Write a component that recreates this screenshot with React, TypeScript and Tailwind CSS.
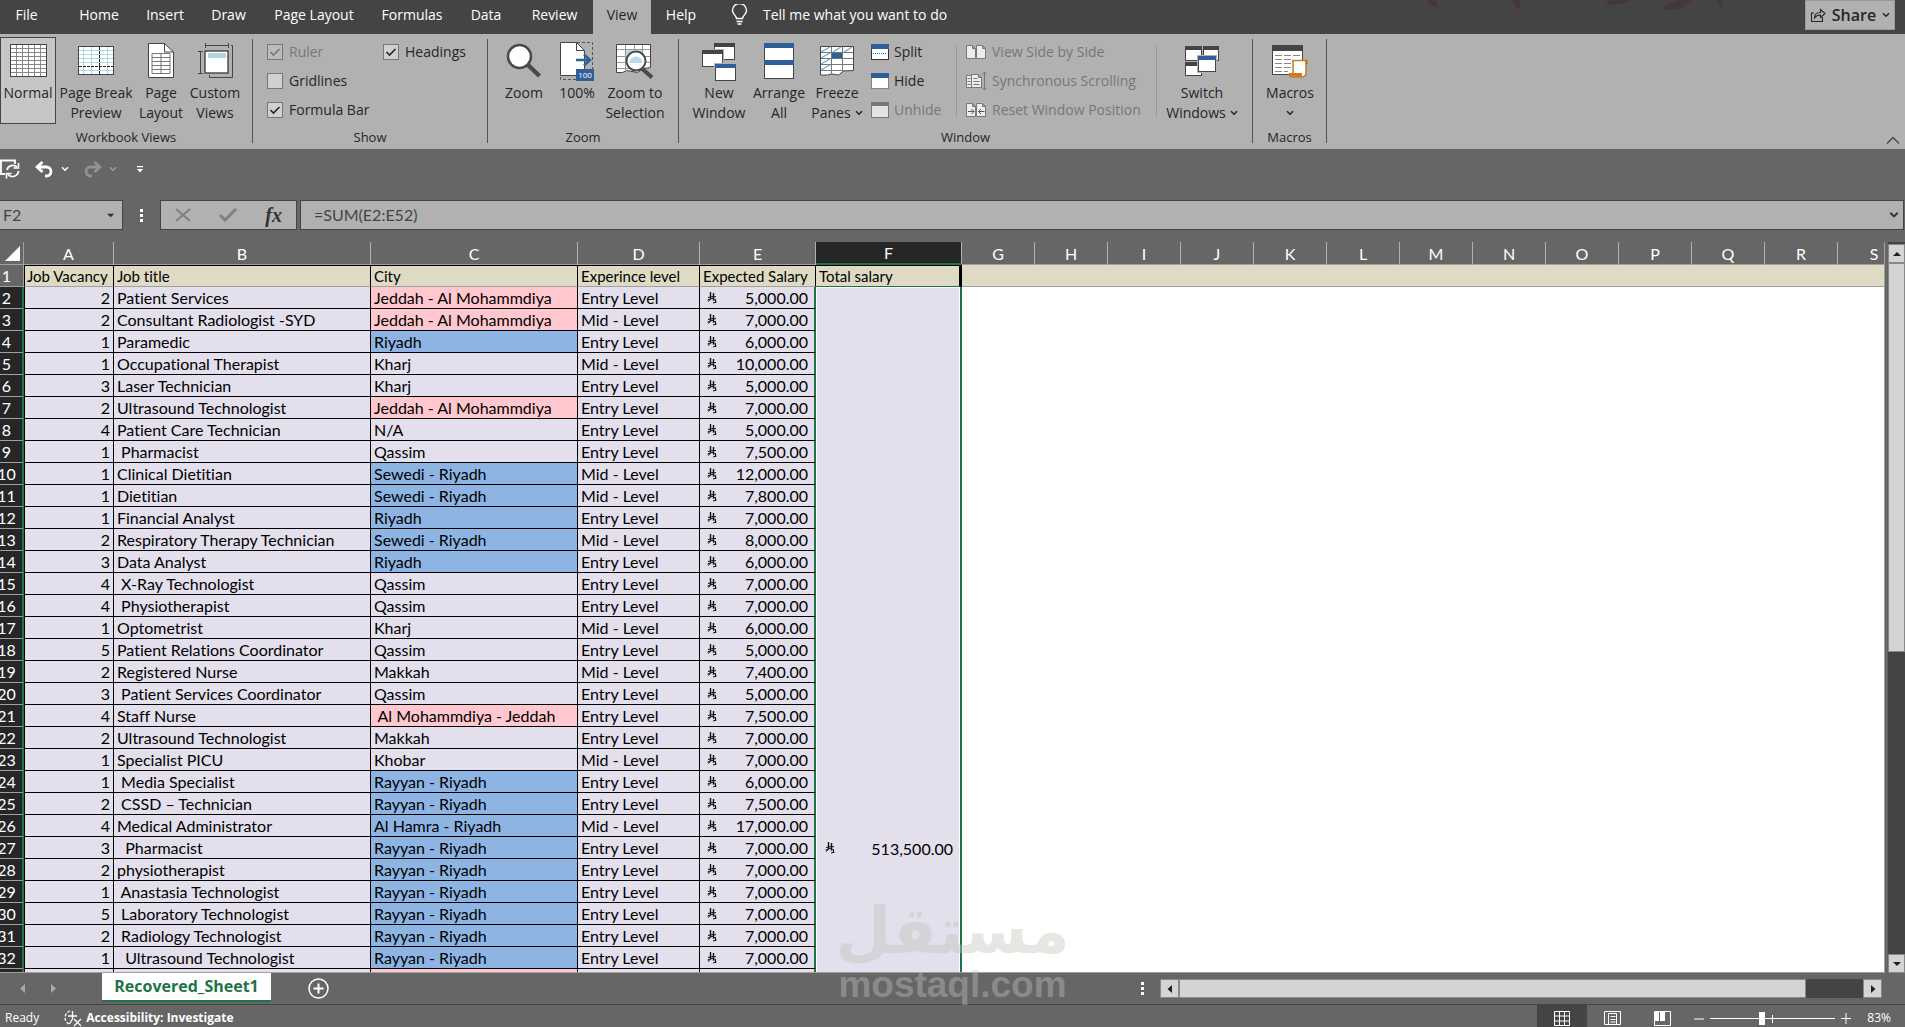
import type { ReactNode } from "react";
import clsx from "clsx";

type Row = [vacancy: number, title: string, city: string, level: "E" | "M", salary: string];

const rows: Row[] = [
  [2, "Patient Services", "Jeddah - Al Mohammdiya", "E", "5,000.00"],
  [2, "Consultant Radiologist -SYD", "Jeddah - Al Mohammdiya", "M", "7,000.00"],
  [1, "Paramedic", "Riyadh", "E", "6,000.00"],
  [1, "Occupational Therapist", "Kharj", "M", "10,000.00"],
  [3, "Laser Technician", "Kharj", "E", "5,000.00"],
  [2, "Ultrasound Technologist", "Jeddah - Al Mohammdiya", "E", "7,000.00"],
  [4, "Patient Care Technician", "N/A", "E", "5,000.00"],
  [1, " Pharmacist", "Qassim", "E", "7,500.00"],
  [1, "Clinical Dietitian", "Sewedi - Riyadh", "M", "12,000.00"],
  [1, "Dietitian", "Sewedi - Riyadh", "M", "7,800.00"],
  [1, "Financial Analyst", "Riyadh", "E", "7,000.00"],
  [2, "Respiratory Therapy Technician", "Sewedi - Riyadh", "M", "8,000.00"],
  [3, "Data Analyst", "Riyadh", "E", "6,000.00"],
  [4, " X-Ray Technologist", "Qassim", "E", "7,000.00"],
  [4, " Physiotherapist", "Qassim", "E", "7,000.00"],
  [1, "Optometrist", "Kharj", "M", "6,000.00"],
  [5, "Patient Relations Coordinator", "Qassim", "E", "5,000.00"],
  [2, "Registered Nurse", "Makkah", "M", "7,400.00"],
  [3, " Patient Services Coordinator", "Qassim", "E", "5,000.00"],
  [4, "Staff Nurse", " Al Mohammdiya - Jeddah", "E", "7,500.00"],
  [2, "Ultrasound Technologist", "Makkah", "E", "7,000.00"],
  [1, "Specialist PICU", "Khobar", "M", "7,000.00"],
  [1, " Media Specialist", "Rayyan - Riyadh", "E", "6,000.00"],
  [2, " CSSD – Technician", "Rayyan - Riyadh", "E", "7,500.00"],
  [4, "Medical Administrator", "Al Hamra - Riyadh", "M", "17,000.00"],
  [3, "  Pharmacist", "Rayyan - Riyadh", "E", "7,000.00"],
  [2, "physiotherapist", "Rayyan - Riyadh", "E", "7,000.00"],
  [1, " Anastasia Technologist", "Rayyan - Riyadh", "E", "7,000.00"],
  [5, " Laboratory Technologist", "Rayyan - Riyadh", "E", "7,000.00"],
  [2, " Radiology Technologist", "Rayyan - Riyadh", "E", "7,000.00"],
  [1, "  Ultrasound Technologist", "Rayyan - Riyadh", "E", "7,000.00"],
];

const emptyRows = Array.from({ length: 20 }, (_, i) => 33 + i);
const letters = "ABCDEFGHIJKLMNOPQRS".split("");

const tabs = [
  { name: "File", width: "w-[53px] mr-3" },
  { name: "Home", width: "w-[68px]" },
  { name: "Insert", width: "w-[64px]" },
  { name: "Draw", width: "w-[63px]" },
  { name: "Page Layout", width: "w-[108px]" },
  { name: "Formulas", width: "w-[88px]" },
  { name: "Data", width: "w-[60px]" },
  { name: "Review", width: "w-[77px]" },
  { name: "View", width: "w-[58px]" },
  { name: "Help", width: "w-[60px]" },
];

function Chevron({ className = "" }: { className?: string }) {
  return (
    <svg viewBox="0 0 8 6" className={clsx("inline-block h-[6px] w-[8px]", className)} fill="none" stroke="currentColor" strokeWidth="1.5">
      <path d="M1 1.2 4 4.2 7 1.2" />
    </svg>
  );
}

function Riyal() {
  return (
    <svg viewBox="0 0 10 12" className="h-3 w-[10px]" fill="none" stroke="#111">
      <path d="M3.500 0v7M6.500 1v7.500" strokeWidth="1.400" />
      <path d="M1 5.500l5-1M1 9.500l2.500-2M.5 8l6-2M6.500 5l2.500-.5M6.500 8l2.500-.5M6 11l3.500-1M8.500 8v3" />
    </svg>
  );
}

/* ribbon icons */

function NormalIcon() {
  return (
    <svg width="37" height="33" viewBox="0 0 37 33">
      <rect x=".5" y=".5" width="36" height="32" fill="#fff" stroke="#444" />
      <path d="M6.5 1v31M12.5 1v31M18.5 1v31M24.5 1v31M30.5 1v31M1 4.5h35M1 8.5h35M1 12.5h35M1 16.5h35M1 20.5h35M1 24.5h35M1 28.5h35" stroke="#888" />
    </svg>
  );
}

function PageBreakIcon() {
  return (
    <svg width="36" height="29" viewBox="0 0 36 29">
      <rect x=".5" y=".5" width="35" height="28" fill="#fff" stroke="#444" />
      <path d="M5.5 1v27M13.5 1v27M29.5 1v27M1 4.5h34M1 8.5h34M1 12.5h34M1 16.5h34M1 24.5h34" stroke="#a9d8ea" />
      <path d="M21.5 1v27M1 20.5h34" stroke="#262626" strokeDasharray="3 1" />
    </svg>
  );
}

function PageLayoutIcon() {
  return (
    <svg width="26" height="35" viewBox="0 0 26 35">
      <path d="M.5.5h16l9 8.5v25.500H.5z" fill="#fff" stroke="#444" />
      <path d="M16.500.5V9h9" fill="none" stroke="#444" />
      <path d="M4 10.500h18v20H4zM4 14.500h18M4 18.500h18M4 22.500h18M4 26.500h18M13 10.500v20" fill="none" stroke="#777" />
    </svg>
  );
}

function CustomViewsIcon() {
  return (
    <svg width="37" height="37" viewBox="0 0 37 37">
      <path d="M8 3.500h24M8.500 1v5M31.500 1v5M3.500 9v22M1 9.500h5M1 31.500h5M34 3.500h1.500V35.500h-23V33" fill="none" stroke="#444" />
      <rect x="8" y="9" width="23" height="22" fill="#fff" stroke="#444" strokeWidth="1.400" />
      <rect x="11" y="11" width="18" height="5" fill="#b5d5e3" />
    </svg>
  );
}

function ZoomIcon() {
  return (
    <svg width="36" height="36" viewBox="0 0 36 36">
      <path d="M21.500 21.500 33.500 33" stroke="#4a4a4a" strokeWidth="4.500" />
      <circle cx="13.500" cy="13.500" r="11.500" fill="#fff" stroke="#4a4a4a" strokeWidth="2.500" />
    </svg>
  );
}

function HundredIcon() {
  return (
    <svg width="34" height="40" viewBox="0 0 34 40">
      <path d="M17 1.500h15.500V28M16 38.500H.5V34" fill="none" stroke="#555" strokeDasharray="3 2" />
      <path d="M.5 1.500h16l8 8V34.500H.5z" fill="#fff" stroke="#444" />
      <path d="M16.500 1.500v8h8" fill="none" stroke="#444" />
      <path d="M16 19h13M24 13.500l6 5.500-6 5.500" fill="none" stroke="#2f6198" strokeWidth="2.500" />
      <rect x="16" y="28" width="18" height="12" fill="#2f5f98" />
      <text x="25" y="37" textAnchor="middle" fontSize="8" fill="#fff" fontFamily="Open Sans, sans-serif">100</text>
    </svg>
  );
}

function ZoomSelectionIcon() {
  return (
    <svg width="38" height="36" viewBox="0 0 38 36">
      <path d="M.5 1.500h34v23l-7 1-6 4-11-2-4 2h-6z" fill="#fff" stroke="#444" />
      <path d="M9.500 2v26M18.500 2v26M26.500 2v23M1 6.500h33M1 13.500h33M1 19.500h33M1 25.500h20" stroke="#999" />
      <path d="M10 7h16v12H10z" fill="#bcdbe8" />
      <path d="M26.500 26 36 34.500" stroke="#4a4a4a" strokeWidth="4" />
      <circle cx="20" cy="18" r="9.500" fill="#fff" stroke="#4a4a4a" strokeWidth="2" />
      <path d="M13.500 20a6.500 6.500 0 1 1 13 0z" fill="#bcdbe8" />
    </svg>
  );
}

function MiniWindow({ x, y, w, h, bar }: { x: number; y: number; w: number; h: number; bar: string }) {
  return (
    <g>
      <rect x={x - 1} y={y - 1} width={w + 2} height={h + 2} fill="#b1b1b1" />
      <rect x={x + 0.5} y={y + 0.5} width={w - 1} height={h - 1} fill="#fff" stroke="#444" />
      <rect x={x} y={y} width={w} height="4" fill={bar} />
    </g>
  );
}

function NewWindowIcon() {
  return (
    <svg width="36" height="40" viewBox="0 0 36 40">
      <MiniWindow x={13} y={2} w={21} h={17} bar="#444" />
      <MiniWindow x={1} y={9} w={21} h={17} bar="#444" />
      <MiniWindow x={14} y={23} w={21} h={17} bar="#2f5f98" />
    </svg>
  );
}

function ArrangeIcon() {
  return (
    <svg width="30" height="36" viewBox="0 0 30 36">
      <rect x=".5" y=".5" width="29" height="35" fill="#fff" stroke="#444" />
      <path d="M0 0h30v5H0zM0 17h30v5H0z" fill="#2f5f98" />
    </svg>
  );
}

function FreezeIcon() {
  return (
    <svg width="34" height="30" viewBox="0 0 34 30">
      <path d="M.5.5h33v24l-10 .5-5 4-7-1-4 1H.5z" fill="#fff" stroke="#444" />
      <path d="M11.500 1v27M22.500 1v25M1 6.500h32M1 12.500h32M1 18.500h32M1 24.500h24" stroke="#777" />
      <path d="M1 6 10 1M1 12l9-5M1 18l9-5M1 24l9-5M13 6l8-5M24 6l8-5" stroke="#6fa8cc" strokeWidth="1.300" />
      <rect x="12" y="7" width="10" height="5" fill="#2f5f98" />
    </svg>
  );
}

function SwitchIcon() {
  return (
    <svg width="36" height="32" viewBox="0 0 36 32">
      <MiniWindow x={1} y={1} w={17} h={15} bar="#444" />
      <MiniWindow x={19} y={1} w={16} h={15} bar="#444" />
      <MiniWindow x={1} y={17} w={17} h={14} bar="#444" />
      <MiniWindow x={14} y={11} w={18} h={16} bar="#2f5f98" />
    </svg>
  );
}

function MacrosIcon() {
  return (
    <svg width="36" height="34" viewBox="0 0 36 34">
      <rect x=".5" y="1.500" width="30" height="29" fill="#fff" stroke="#444" />
      <rect y="1" width="31" height="6" fill="#444" />
      <path d="M3 11.500h7M12 11.500h7M21 11.500h7M3 15.500h7M12 15.500h7M3 19.500h7M12 19.500h7M3 23.500h7M12 23.500h7M3 27.500h7M12 27.500h4" stroke="#888" />
      <path d="M21 30V16.500h13V30.500l-3 2.500H19z" fill="#fff" stroke="#c97d2b" strokeWidth="1.600" />
      <path d="M17 29h13v4H17zM33 16h3v4h-3z" fill="#c97d2b" />
    </svg>
  );
}

function SmallWindowIcon({ kind }: { kind: "split" | "hide" | "unhide" }) {
  const off = kind === "unhide";
  return (
    <svg width="18" height="16" viewBox="0 0 18 16">
      <rect x=".5" y=".5" width="17" height="15" fill={off ? "#e4e4e4" : "#fff"} stroke={off ? "#777" : "#333"} strokeDasharray={kind === "hide" ? "1 1" : undefined} />
      <rect width="18" height={kind === "unhide" ? 4 : 5} fill={off ? "#777" : "#2f5f98"} />
      {kind === "split" && <path d="M2 9.500h14" stroke="#2f5f98" strokeDasharray="1 1" />}
    </svg>
  );
}

function PagesIcon({ kind }: { kind: "side" | "sync" | "reset" }) {
  return (
    <svg width="21" height="20" viewBox="0 0 21 20" fill="#ececec" stroke="#777">
      {kind === "sync" ? (
        <>
          <path d="M.5 4.500h5v12h-5zM5.500 3.500h7l3 3v10h-10zM12.500 3.500v3h3" />
          <path d="M1.500 7.500h3M1.500 10.500h3M1.500 13.500h3M7.500 7.500h4M7.500 10.500h6M7.500 13.500h6" />
          <path d="M18.500 1v18M16.500 3.500l2-2.500 2 2.500M16.500 16.500l2 2.500 2-2.500" fill="none" />
        </>
      ) : (
        <>
          <path d="M.5 3.500h6l3 3v10h-9zM10.500 3.500h6l3 3v10h-9zM6.500 3.500v3h3M16.500 3.500v3h3" />
          {kind === "reset" && <path d="M2 11.500h6M5.500 9l2.500 2.500L5.500 14M18.500 11.500h-6M15 9l-2.500 2.500L15 14" fill="none" stroke="#555" />}
        </>
      )}
    </svg>
  );
}

function BigButton({ icon, lines, width, active, arrow }: { icon: ReactNode; lines: string[]; width: string; active?: boolean; arrow?: boolean }) {
  return (
    <button className={clsx("flex h-[87px] flex-col items-center border text-[14px] leading-5 whitespace-nowrap", width, active ? "border-[#444] bg-[#c6c6c6]" : "border-transparent")}>
      <span className="flex h-[45px] items-center justify-center">{icon}</span>
      <span>{lines[0]}</span>
      <span className="flex min-h-5 items-center gap-1">
        {lines[1]}
        {arrow && <Chevron />}
      </span>
    </button>
  );
}

function Group({ label, width, children }: { label: string; width: string; children: ReactNode }) {
  return (
    <section className={clsx("flex shrink-0 flex-col", width)}>
      <div className="flex h-[91px]">{children}</div>
      <div className="flex h-5 items-center justify-center text-[13px]">{label}</div>
    </section>
  );
}

function Divider() {
  return <div className="my-[2px] h-[104px] w-px shrink-0 bg-[#555]" />;
}

function Check({ label, checked, disabled }: { label: string; checked?: boolean; disabled?: boolean }) {
  return (
    <label className={clsx("flex h-[29px] items-center gap-[6px] whitespace-nowrap", disabled && "text-[#777]")}>
      <span className="relative flex h-4 w-4">
        <input type="checkbox" defaultChecked={checked} disabled={disabled} className={clsx("h-4 w-4 appearance-none border border-[#777]", disabled ? "bg-[#bbb]" : "bg-[#d0d0d0]")} />
        {checked && (
          <svg viewBox="0 0 16 16" className="pointer-events-none absolute inset-0" fill="none" stroke="currentColor" strokeWidth="1.600">
            <path d="M3.500 8 6.500 11 12.500 5" />
          </svg>
        )}
      </span>
      {label}
    </label>
  );
}

function SmallButton({ icon, label, disabled }: { icon: ReactNode; label: string; disabled?: boolean }) {
  return (
    <button disabled={disabled} className={clsx("flex h-[29px] items-center gap-[5px] whitespace-nowrap", disabled && "text-[#777]")}>
      {icon}
      {label}
    </button>
  );
}

function TopBar() {
  return (
    <header className="relative flex h-[34px] shrink-0 items-start bg-[#444] text-[14px] text-white">
      <svg className="absolute top-0 right-[180px] h-[10px] w-[300px]" viewBox="0 0 300 10" fill="#43363f">
        <path d="M2 0h9l2 8-6-2zM87 0h8v9l-5-3zM179 3l6-3h19l-6 4-10 1zM219 0h2v3zM236 9l16-9h14l-9 8-12 2zM292 0h6l-2 9z" />
      </svg>
      <nav className="flex">
        {tabs.map((t) => (
          <button key={t.name} className={clsx("h-[34px] pb-[5px] text-center whitespace-nowrap", t.width, t.name === "View" && "bg-[#b1b1b1] text-[#262626]")}>
            {t.name}
          </button>
        ))}
      </nav>
      <button className="ml-5 flex h-[29px] items-center gap-[15px] whitespace-nowrap">
        <svg width="17" height="21" viewBox="0 0 17 21" fill="none" stroke="#fff" strokeWidth="1.400">
          <path d="M5.500 14.500c0-3-4-4-4-8a7 7 0 0 1 14 0c0 4-4 5-4 8zM5.500 17.500h6M6.500 20h4" />
        </svg>
        Tell me what you want to do
      </button>
      <button className="mr-[10px] ml-auto flex h-[30px] w-[90px] items-center justify-between border border-[#999] bg-[#b1b1b1] px-1 text-[16px] font-semibold text-[#262626]">
        <svg width="16" height="16" viewBox="0 0 16 16" fill="none" stroke="#262626" strokeWidth="1.100">
          <path d="M4 6H1.500v8.500h11V10M4.500 11c0-4 3-5.500 6-5.500v-3L15 6.500l-4.500 4v-2.500c-3 0-4.500 1-6 3z" />
        </svg>
        Share
        <Chevron />
      </button>
    </header>
  );
}

function Ribbon() {
  return (
    <div className="flex h-[115px] shrink-0 bg-[#b1b1b1] pt-[3px] text-[14px] text-[#262626]">
      <Group label="Workbook Views" width="w-[252px]">
        <div className="flex gap-px">
          <BigButton active icon={<NormalIcon />} lines={["Normal"]} width="w-[56px]" />
          <BigButton icon={<PageBreakIcon />} lines={["Page Break", "Preview"]} width="w-[78px]" />
          <BigButton icon={<PageLayoutIcon />} lines={["Page", "Layout"]} width="w-[50px]" />
          <BigButton icon={<CustomViewsIcon />} lines={["Custom", "Views"]} width="w-[56px]" />
        </div>
      </Group>
      <Divider />
      <Group label="Show" width="w-[234px]">
        <div className="flex pl-[14px]">
          <div className="w-[116px]">
            <Check label="Ruler" checked disabled />
            <Check label="Gridlines" />
            <Check label="Formula Bar" checked />
          </div>
          <Check label="Headings" checked />
        </div>
      </Group>
      <Divider />
      <Group label="Zoom" width="w-[190px]">
        <div className="flex gap-px pl-[9px]">
          <BigButton icon={<ZoomIcon />} lines={["Zoom"]} width="w-[54px]" />
          <BigButton icon={<HundredIcon />} lines={["100%"]} width="w-[50px]" />
          <BigButton icon={<ZoomSelectionIcon />} lines={["Zoom to", "Selection"]} width="w-[64px]" />
        </div>
      </Group>
      <Divider />
      <Group label="Window" width="w-[573px]">
        <div className="flex pl-[11px]">
          <BigButton icon={<NewWindowIcon />} lines={["New", "Window"]} width="w-[58px]" />
          <BigButton icon={<ArrangeIcon />} lines={["Arrange", "All"]} width="w-[62px]" />
          <BigButton icon={<FreezeIcon />} lines={["Freeze", "Panes"]} width="w-[54px]" arrow />
        </div>
        <div className="ml-[7px] w-[85px]">
          <SmallButton icon={<SmallWindowIcon kind="split" />} label="Split" />
          <SmallButton icon={<SmallWindowIcon kind="hide" />} label="Hide" />
          <SmallButton icon={<SmallWindowIcon kind="unhide" />} label="Unhide" disabled />
        </div>
        <div className="mt-2 mb-3 w-px bg-[#999]" />
        <div className="ml-[9px] w-[190px]">
          <SmallButton icon={<PagesIcon kind="side" />} label="View Side by Side" disabled />
          <SmallButton icon={<PagesIcon kind="sync" />} label="Synchronous Scrolling" disabled />
          <SmallButton icon={<PagesIcon kind="reset" />} label="Reset Window Position" disabled />
        </div>
        <div className="mt-2 mb-3 w-px bg-[#999]" />
        <div className="pl-[6px]">
          <BigButton icon={<SwitchIcon />} lines={["Switch", "Windows"]} width="w-[78px]" arrow />
        </div>
      </Group>
      <Divider />
      <Group label="Macros" width="w-[73px]">
        <div className="pl-[7px]">
          <BigButton icon={<MacrosIcon />} lines={["Macros"]} width="w-[60px]" arrow />
        </div>
      </Group>
      <Divider />
      <button aria-label="Collapse ribbon" className="mt-auto mr-[5px] mb-1 ml-auto">
        <svg width="14" height="9" viewBox="0 0 14 9" fill="none" stroke="#444" strokeWidth="1.300">
          <path d="M1 7.500 7 1.500 13 7.500" />
        </svg>
      </button>
    </div>
  );
}

function QuickAccess() {
  return (
    <div className="flex h-[40px] shrink-0 items-center text-white">
      <button aria-label="Save">
        <svg width="20" height="20" viewBox="0 0 20 20" fill="none" stroke="currentColor" strokeWidth="1.800">
          <path d="M0 1.500h15V5M0 15h5M1 1v14" />
          <path d="M7 11a6 6 0 0 1 10-3M18.500 12a6 6 0 0 1-10.500 3.500" />
          <path d="M18.500 4v5h-5M6.500 19.500v-5h5" strokeWidth="1.600" />
        </svg>
      </button>
      <button aria-label="Undo" className="ml-[15px]">
        <svg width="19" height="17" viewBox="0 0 19 17" fill="none" stroke="currentColor" strokeWidth="2.800">
          <path d="M7.500 1 2 6l5.500 5M2 6h9.500a4.500 4.500 0 0 1 0 9H10" />
        </svg>
      </button>
      <Chevron className="ml-[7px]" />
      <button aria-label="Redo" disabled className="ml-[14px] text-[#929292]">
        <svg width="19" height="17" viewBox="0 0 19 17" fill="none" stroke="currentColor" strokeWidth="2.800">
          <path d="M11.500 1 17 6l-5.500 5M17 6H7.500a4.500 4.500 0 0 0 0 9H9" />
        </svg>
      </button>
      <Chevron className="ml-[7px] text-[#a0a0a0]" />
      <button aria-label="Customize toolbar" className="ml-[20px]">
        <svg width="6" height="7" viewBox="0 0 6 7" fill="currentColor">
          <path d="M0 0h6v1.200H0zM0 3h6L3 6.500z" />
        </svg>
      </button>
    </div>
  );
}

function Dots() {
  return (
    <div className="flex w-[3px] flex-col gap-[2px]">
      <i className="h-[3px] bg-white" />
      <i className="h-[3px] bg-white" />
      <i className="h-[3px] bg-white" />
    </div>
  );
}

function FormulaBar() {
  return (
    <div className="mt-[11px] flex h-[30px] shrink-0 items-stretch pr-px font-[Lato,sans-serif] text-[16px] text-[#444]">
      <div className="flex w-[123px] items-center border border-l-0 border-[#444] bg-[#b1b1b1] pr-2">
        <input aria-label="Name box" defaultValue="F2" className="w-full min-w-0 bg-transparent pl-[3px] outline-none" />
        <svg width="8" height="5" viewBox="0 0 8 5" fill="#333">
          <path d="M0 .5h8L4 4.500z" />
        </svg>
      </div>
      <div className="flex w-[37px] items-center justify-center">
        <Dots />
      </div>
      <div className="flex w-[137px] items-center justify-between border border-[#444] bg-[#b1b1b1] px-[14px]">
        <button aria-label="Cancel">
          <svg width="16" height="14" viewBox="0 0 16 14" stroke="#808080" strokeWidth="2">
            <path d="M1 1 15 13M15 1 1 13" />
          </svg>
        </button>
        <button aria-label="Enter">
          <svg width="18" height="14" viewBox="0 0 18 14" fill="none" stroke="#808080" strokeWidth="3">
            <path d="M1 7 6 12 17 1" />
          </svg>
        </button>
        <button aria-label="Insert function" className="font-['Liberation_Serif',serif] text-[20px] leading-6 font-bold text-[#333] italic">
          fx
        </button>
      </div>
      <div className="ml-[3px] flex flex-1 items-center border border-[#444] bg-[#b1b1b1] pr-1">
        <input aria-label="Formula" defaultValue="=SUM(E2:E52)" className="flex-1 bg-transparent pl-[13px] outline-none" />
        <Chevron className="h-[8px] w-[10px] text-[#333]" />
      </div>
    </div>
  );
}

const cell = "border-r border-b border-black bg-[#e3dfec] whitespace-pre";

function RowHead({ n }: { n: number }) {
  return (
    <th scope="row" className="border-r-2 border-b border-r-[#217346] border-b-[#a0a0a0] bg-[#262626] font-normal text-white">
      <div className="flex w-[13px] justify-center">{n}</div>
    </th>
  );
}

function Sheet() {
  return (
    <div className="min-w-0 flex-1 overflow-hidden border-r border-b border-[#a0a0a0] bg-white">
      <table className="w-[1911px] table-fixed border-separate border-spacing-0 font-[Lato,sans-serif] text-[16px] leading-[21px] text-black [font-variant-ligatures:none]">
        <colgroup>
          <col className="w-[24px]" />
          <col className="w-[90px]" />
          <col className="w-[257px]" />
          <col className="w-[207px]" />
          <col className="w-[122px]" />
          <col className="w-[116px]" />
          <col className="w-[146px]" />
          {letters.slice(6).map((l) => (
            <col key={l} className="w-[73px]" />
          ))}
        </colgroup>
        <thead>
          <tr className="h-[23px] bg-[#666] text-white">
            <th className="border-r border-b border-[#a0a0a0]">
              <svg width="15" height="15" viewBox="0 0 15 15" className="ml-[5px]" fill="#fff">
                <path d="M15 0v15H0z" />
              </svg>
            </th>
            {letters.map((l) => (
              <th key={l} scope="col" className={clsx("border-r border-r-[#b1b1b1] font-normal", l === "F" ? "border-b-2 border-b-[#217346] bg-[#262626] leading-5" : "border-b border-b-[#a0a0a0]")}>
                {l}
              </th>
            ))}
          </tr>
        </thead>
        <tbody>
          <tr className="h-[22px]">
            <th scope="row" className="border-r border-b border-[#a0a0a0] bg-[#666] font-normal text-white">
              <div className="flex w-[13px] justify-center">1</div>
            </th>
            {["Job Vacancy", "Job title", "City", "Experince level", "Expected Salary", "Total salary"].map((h, i) => (
              <td
                key={h}
                className={clsx(
                  "border-t border-r border-b border-black bg-[#dfdac3] text-[15px] leading-5 whitespace-nowrap",
                  i === 0 ? "border-l pl-[2px]" : "pl-[3px]",
                  i === 5 ? "border-r-[3px] border-b-[#217346]" : "border-b-[#a0a0a0]",
                )}
              >
                {h}
              </td>
            ))}
            <td colSpan={13} className="border-b border-[#a0a0a0] bg-[#dfdac3]" />
          </tr>
          {rows.map(([vacancy, title, city, level, salary], i) => (
            <tr key={i} className="h-[22px]">
              <RowHead n={i + 2} />
              <td className={clsx(cell, "border-l pr-[3px] text-right")}>{vacancy}</td>
              <td className={clsx(cell, "pl-[3px]")}>{title}</td>
              <td className={clsx("border-r border-b border-black pl-[3px] whitespace-pre", city.includes("Jeddah") ? "bg-[#ffc7ce]" : city.includes("Riyadh") ? "bg-[#8db4e2]" : "bg-[#e3dfec]")}>{city}</td>
              <td className={clsx(cell, "pl-[3px]")}>{level === "E" ? "Entry Level" : "Mid - Level"}</td>
              <td className="border-r-2 border-b border-r-[#217346] border-b-black bg-[#e3dfec]">
                <div className="flex items-center justify-between pr-[6px] pl-[7px]">
                  <Riyal />
                  {salary}
                </div>
              </td>
              {i === 0 && (
                <>
                  <td rowSpan={51} className="border-r-2 border-[#217346] bg-[#e3dfec] shadow-[inset_0_0_0_1px_#fff]">
                    <div className="flex items-center justify-between pr-[7px] pl-[9px]">
                      <Riyal />
                      513,500.00
                    </div>
                  </td>
                  <td rowSpan={51} colSpan={13} />
                </>
              )}
            </tr>
          ))}
          {emptyRows.map((n) => (
            <tr key={n} className="h-[22px]">
              <RowHead n={n} />
              <td className={clsx(cell, "border-l")} />
              <td className={cell} />
              <td className="border-r border-b border-black bg-[#ffc7ce]" />
              <td className={cell} />
              <td className="border-r-2 border-b border-r-[#217346] border-b-black bg-[#e3dfec]" />
            </tr>
          ))}
        </tbody>
      </table>
    </div>
  );
}

function ScrollButton({ label, d, className }: { label: string; d: string; className: string }) {
  return (
    <button aria-label={label} className={clsx("flex shrink-0 items-center justify-center border border-[#888] bg-[#d4d4d4]", className)}>
      <svg width="10" height="10" viewBox="0 0 10 10" fill="#1f1f1f">
        <path d={d} />
      </svg>
    </button>
  );
}

function SheetTabs() {
  return (
    <div className="flex h-[32px] shrink-0 border-b border-[#444]">
      <div className="flex w-[102px] items-center gap-[26px] pl-[20px] text-[#a8a8a8]">
        <button aria-label="Previous sheet">
          <svg width="5" height="9" viewBox="0 0 5 9" fill="currentColor"><path d="M5 0v9L0 4.500z" /></svg>
        </button>
        <button aria-label="Next sheet">
          <svg width="5" height="9" viewBox="0 0 5 9" fill="currentColor"><path d="M0 0v9l5-4.500z" /></svg>
        </button>
      </div>
      <button className="h-[29px] w-[169px] border-b-2 border-[#217346] bg-white pb-px text-[16px] font-bold text-[#217346]">Recovered_Sheet1</button>
      <button aria-label="New sheet" className="ml-[37px]">
        <svg width="21" height="21" viewBox="0 0 21 21" fill="none" stroke="#fff" strokeWidth="1.500">
          <circle cx="10.500" cy="10.500" r="9.500" />
          <path d="M10.500 5.500v10M5.500 10.500h10" strokeWidth="2" />
        </svg>
      </button>
      <div className="mr-[23px] ml-auto flex w-[741px] items-center">
        <Dots />
        <div className="ml-[16px] flex h-[19px] flex-1 bg-[#444]">
          <ScrollButton label="Scroll left" d="M7 1v8L2.500 5z" className="w-[19px]" />
          <div className="w-[627px] border border-[#888] bg-[#d4d4d4]" />
          <ScrollButton label="Scroll right" d="M3 1v8l4.500-4z" className="ml-auto w-[19px]" />
        </div>
      </div>
    </div>
  );
}

function StatusBar() {
  return (
    <footer className="flex h-[22px] shrink-0 overflow-hidden text-[12px] leading-[26px] text-white">
      <span className="pl-[5px]">Ready</span>
      <button className="ml-[24px] flex gap-1 font-bold">
        <svg width="19" height="17" viewBox="0 0 19 17" className="mt-[5px]" fill="none" stroke="#fff" strokeWidth="1.300">
          <path d="M7 1a7 7 0 0 0-1 13" strokeDasharray="3 1.500" />
          <path d="M5 6h9M9.500 1v8M9.500 9l-3 5M11 9l7 7M18 9l-7 7" />
        </svg>
        Accessibility: Investigate
      </button>
      <div className="ml-auto flex pr-[14px]">
        <button aria-label="Normal view" className="flex w-[50px] justify-center bg-[#444] pt-[6px]">
          <svg width="16" height="15" viewBox="0 0 16 15" fill="none" stroke="#fff"><path d="M.5.5h15v14H.5zM5.500 0v15M10.500 0v15M0 5h16M0 10h16" /></svg>
        </button>
        <button aria-label="Page layout view" className="flex w-[50px] justify-center pt-[6px]">
          <svg width="17" height="14" viewBox="0 0 17 14" fill="none" stroke="#fff"><path d="M.5.500h16v13H.5zM4.500 13V2.500h8V13M6.500 5.500h5M6.500 8.500h5M6.500 11h5" /></svg>
        </button>
        <button aria-label="Page break view" className="flex w-[50px] justify-center pt-[6px]">
          <svg width="17" height="15" viewBox="0 0 17 15"><path d="M.5.5h16v14H.5z" fill="none" stroke="#fff" /><path d="M1 1h4v9H1zM6 1h5v9H6z" fill="#fff" /></svg>
        </button>
        <button aria-label="Zoom out" className="ml-[7px] flex pt-[13px]">
          <svg width="10" height="2" viewBox="0 0 10 2"><path d="M0 1h10" stroke="#fff" /></svg>
        </button>
        <div className="relative ml-[6px] w-[125px] pt-[7px]">
          <span className="absolute top-[10px] left-[62px] h-[8px] w-px bg-white" />
          <input
            type="range"
            aria-label="Zoom"
            defaultValue={41}
            className="relative block h-[13px] w-full appearance-none bg-[linear-gradient(#fff,#fff)] bg-[length:100%_1px] bg-center bg-no-repeat [&::-webkit-slider-thumb]:h-[13px] [&::-webkit-slider-thumb]:w-[6px] [&::-webkit-slider-thumb]:appearance-none [&::-webkit-slider-thumb]:bg-white"
          />
        </div>
        <button aria-label="Zoom in" className="ml-[6px] flex pt-[8px]">
          <svg width="10" height="11" viewBox="0 0 10 11"><path d="M0 5.500h10M5 0v11" stroke="#fff" /></svg>
        </button>
        <span className="ml-4">83%</span>
      </div>
    </footer>
  );
}

export default function App() {
  return (
    <div className="relative flex h-screen flex-col overflow-hidden bg-[#666] font-['Open_Sans',sans-serif]">
      <TopBar />
      <Ribbon />
      <QuickAccess />
      <FormulaBar />
      <main className="mt-3 flex min-h-0 flex-1">
        <Sheet />
        <div className="ml-[3px] flex w-[17px] flex-col bg-[#444] pt-[2px]">
          <ScrollButton label="Scroll up" d="M1 7h8L5 3z" className="h-[19px]" />
          <div className="h-[389px] border border-[#888] bg-[#d4d4d4]" />
          <ScrollButton label="Scroll down" d="M1 3h8L5 7z" className="mt-auto h-[19px]" />
        </div>
      </main>
      <SheetTabs />
      <StatusBar />
      <div className="pointer-events-none absolute bottom-[20px] left-[838px] flex w-[229px] flex-col items-center font-bold text-[#c1c1bb] opacity-40">
        <span lang="ar" dir="rtl" className="font-['DejaVu_Sans',sans-serif] text-[64px] leading-[64px]">مستقل</span>
        <span className="font-['Liberation_Sans',sans-serif] text-[37px] leading-[44px]">mostaql.com</span>
      </div>
    </div>
  );
}
